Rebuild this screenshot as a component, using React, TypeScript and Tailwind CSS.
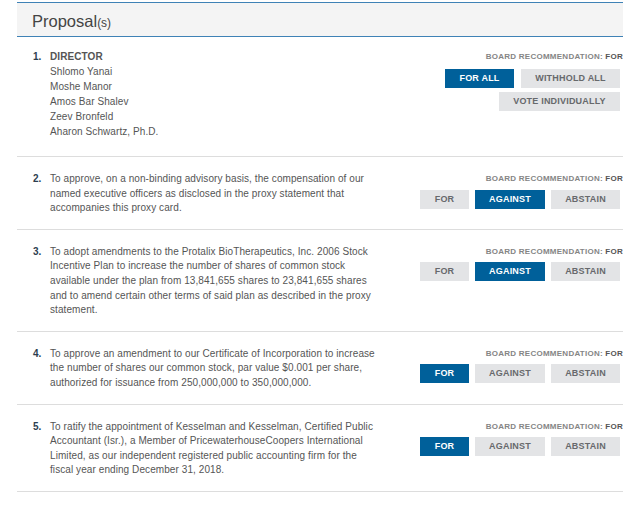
import React from 'react';

type Choice = { label: string; width: string; active?: boolean };

type Proposal = {
  num: string;
  text: string;
  choices: Choice[];
};

const proposals: Proposal[] = [
  {
    num: '2.',
    text: 'To approve, on a non-binding advisory basis, the compensation of our named executive officers as disclosed in the proxy statement that accompanies this proxy card.',
    choices: [
      { label: 'FOR', width: 'w-[49px]' },
      { label: 'AGAINST', width: 'w-[70px]', active: true },
      { label: 'ABSTAIN', width: 'w-[69px]' },
    ],
  },
  {
    num: '3.',
    text: 'To adopt amendments to the Protalix BioTherapeutics, Inc. 2006 Stock Incentive Plan to increase the number of shares of common stock available under the plan from 13,841,655 shares to 23,841,655 shares and to amend certain other terms of said plan as described in the proxy statement.',
    choices: [
      { label: 'FOR', width: 'w-[49px]' },
      { label: 'AGAINST', width: 'w-[70px]', active: true },
      { label: 'ABSTAIN', width: 'w-[69px]' },
    ],
  },
  {
    num: '4.',
    text: 'To approve an amendment to our Certificate of Incorporation to increase the number of shares our common stock, par value $0.001 per share, authorized for issuance from 250,000,000 to 350,000,000.',
    choices: [
      { label: 'FOR', width: 'w-[49px]', active: true },
      { label: 'AGAINST', width: 'w-[70px]' },
      { label: 'ABSTAIN', width: 'w-[69px]' },
    ],
  },
  {
    num: '5.',
    text: 'To ratify the appointment of Kesselman and Kesselman, Certified Public Accountant (Isr.), a Member of PricewaterhouseCoopers International Limited, as our independent registered public accounting firm for the fiscal year ending December 31, 2018.',
    choices: [
      { label: 'FOR', width: 'w-[49px]', active: true },
      { label: 'AGAINST', width: 'w-[70px]' },
      { label: 'ABSTAIN', width: 'w-[69px]' },
    ],
  },
];

const directors = ['Shlomo Yanai', 'Moshe Manor', 'Amos Bar Shalev', 'Zeev Bronfeld', 'Aharon Schwartz, Ph.D.'];

function VoteButton({ label, width, active }: Choice) {
  return (
    <button
      className={`${width} h-[19px] flex items-center justify-center text-[9px] font-bold tracking-[0.2px] leading-none ${
        active ? 'bg-[#00609a] text-white' : 'bg-[#e3e4e6] text-[#67696c]'
      }`}
    >
      {label}
    </button>
  );
}

function Recommendation() {
  return (
    <div className="text-[8px] font-bold tracking-[0.25px] leading-[14.6px] text-[#858585] whitespace-nowrap">
      BOARD RECOMMENDATION: <span className="text-[#555]">FOR</span>
    </div>
  );
}

export default function App() {
  return (
    <div className="w-[640px] h-[507px] bg-white pt-[2px] px-[17px] font-['Liberation_Sans',Arial,sans-serif]">
      <div className="h-[35px] bg-[#f4f4f4] border-y border-[#3f82b6] pl-[15px] flex items-center">
        <h1 className="text-[16.5px] text-[#444] leading-none mt-[3px]">
          Proposal<span className="text-[12px]">(s)</span>
        </h1>
      </div>

      <div className="flex pl-[16px] pt-[13px] pb-[17px] border-b border-[#dddddd]">
        <span className="w-[17px] text-[10px] font-bold leading-[14px] text-[#2d3e4f]">1.</span>
        <div className="w-[326px] text-[10px] tracking-[0.08px] text-[#555]">
          <div className="leading-[14px] font-bold text-[#555]">DIRECTOR</div>
          {directors.map((d) => (
            <div key={d} className="leading-[15px]">
              {d}
            </div>
          ))}
        </div>
        <div className="flex-1 flex flex-col items-end">
          <Recommendation />
          <div className="flex gap-[7px] mt-[4px] mr-[3px]">
            <VoteButton label="FOR ALL" width="w-[69px]" active />
            <VoteButton label="WITHHOLD ALL" width="w-[99px]" />
          </div>
          <div className="mt-[4px] mr-[3px]">
            <VoteButton label="VOTE INDIVIDUALLY" width="w-[121px]" />
          </div>
        </div>
      </div>

      {proposals.map((p) => (
        <div key={p.num} className="flex pl-[16px] pt-[15px] pb-[13px] border-b border-[#dddddd]">
          <span className="w-[17px] text-[10px] font-bold leading-[14.6px] text-[#2d3e4f]">{p.num}</span>
          <p className="w-[326px] text-[10px] tracking-[0.08px] leading-[14.6px] text-[#555]">{p.text}</p>
          <div className="flex-1 flex flex-col items-end">
            <Recommendation />
            <div className="flex gap-[6px] mt-[3px] mr-[3px]">
              {p.choices.map((c) => (
                <VoteButton key={c.label} {...c} />
              ))}
            </div>
          </div>
        </div>
      ))}
    </div>
  );
}
